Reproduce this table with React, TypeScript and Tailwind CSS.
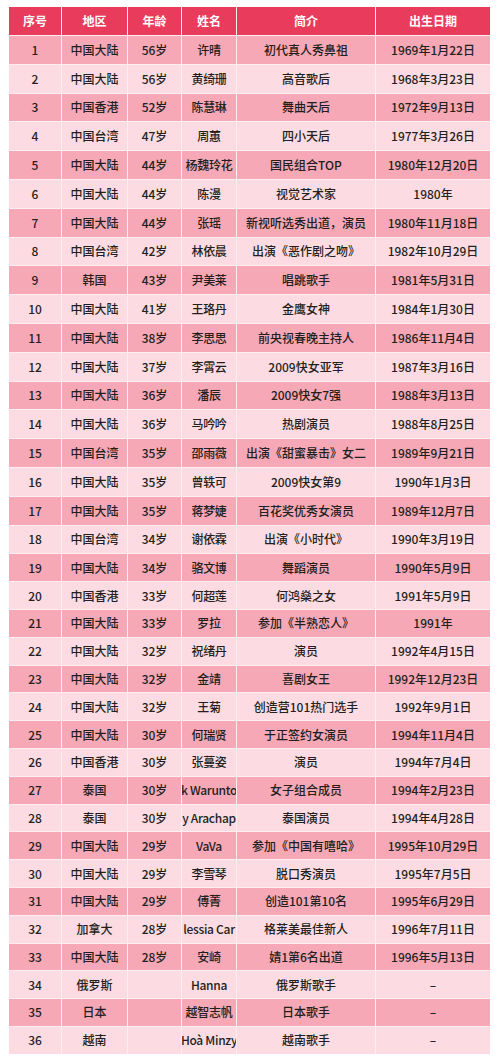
const rows: string[][] = [
  ["1", "中国大陆", "56岁", "许晴", "初代真人秀鼻祖", "1969年1月22日"],
  ["2", "中国大陆", "56岁", "黄绮珊", "高音歌后", "1968年3月23日"],
  ["3", "中国香港", "52岁", "陈慧琳", "舞曲天后", "1972年9月13日"],
  ["4", "中国台湾", "47岁", "周蕙", "四小天后", "1977年3月26日"],
  ["5", "中国大陆", "44岁", "杨魏玲花", "国民组合TOP", "1980年12月20日"],
  ["6", "中国大陆", "44岁", "陈漫", "视觉艺术家", "1980年"],
  ["7", "中国大陆", "44岁", "张瑶", "新视听选秀出道，演员", "1980年11月18日"],
  ["8", "中国台湾", "42岁", "林依晨", "出演《恶作剧之吻》", "1982年10月29日"],
  ["9", "韩国", "43岁", "尹美莱", "唱跳歌手", "1981年5月31日"],
  ["10", "中国大陆", "41岁", "王珞丹", "金鹰女神", "1984年1月30日"],
  ["11", "中国大陆", "38岁", "李思思", "前央视春晚主持人", "1986年11月4日"],
  ["12", "中国大陆", "37岁", "李霄云", "2009快女亚军", "1987年3月16日"],
  ["13", "中国大陆", "36岁", "潘辰", "2009快女7强", "1988年3月13日"],
  ["14", "中国大陆", "36岁", "马吟吟", "热剧演员", "1988年8月25日"],
  ["15", "中国台湾", "35岁", "邵雨薇", "出演《甜蜜暴击》女二", "1989年9月21日"],
  ["16", "中国大陆", "35岁", "曾轶可", "2009快女第9", "1990年1月3日"],
  ["17", "中国大陆", "35岁", "蒋梦婕", "百花奖优秀女演员", "1989年12月7日"],
  ["18", "中国台湾", "34岁", "谢依霖", "出演《小时代》", "1990年3月19日"],
  ["19", "中国大陆", "34岁", "骆文博", "舞蹈演员", "1990年5月9日"],
  ["20", "中国香港", "33岁", "何超莲", "何鸿燊之女", "1991年5月9日"],
  ["21", "中国大陆", "33岁", "罗拉", "参加《半熟恋人》", "1991年"],
  ["22", "中国大陆", "32岁", "祝绪丹", "演员", "1992年4月15日"],
  ["23", "中国大陆", "32岁", "金靖", "喜剧女王", "1992年12月23日"],
  ["24", "中国大陆", "32岁", "王菊", "创造营101热门选手", "1992年9月1日"],
  ["25", "中国大陆", "30岁", "何瑞贤", "于正签约女演员", "1994年11月4日"],
  ["26", "中国香港", "30岁", "张蔓姿", "演员", "1994年7月4日"],
  ["27", "泰国", "30岁", "k Warunto", "女子组合成员", "1994年2月23日"],
  ["28", "泰国", "30岁", "y Arachap", "泰国演员", "1994年4月28日"],
  ["29", "中国大陆", "29岁", "VaVa", "参加《中国有嘻哈》", "1995年10月29日"],
  ["30", "中国大陆", "29岁", "李雪琴", "脱口秀演员", "1995年7月5日"],
  ["31", "中国大陆", "29岁", "傅菁", "创造101第10名", "1995年6月29日"],
  ["32", "加拿大", "28岁", "lessia Car", "格莱美最佳新人", "1996年7月11日"],
  ["33", "中国大陆", "28岁", "安崎", "婧1第6名出道", "1996年5月13日"],
  ["34", "俄罗斯", "", "Hanna", "俄罗斯歌手", "–"],
  ["35", "日本", "", "越智志帆", "日本歌手", "–"],
  ["36", "越南", "", "Hoà Minzy", "越南歌手", "–"],
];

const headers = ["序号", "地区", "年龄", "姓名", "简介", "出生日期"];

const grid = "grid grid-cols-[52px_65px_53px_54px_138px_114px] gap-x-px";

export default function App() {
  return (
    <div className="min-h-[1059px] w-[500px] bg-white pl-[9px] pt-[7px] font-['Noto_Sans_CJK_SC',sans-serif]">
      <div className="flex w-[481px] flex-col gap-y-px bg-[#fdeef1]">
        <div className={`${grid} h-[28px]`}>
          {headers.map((h) => (
            <div key={h} className="flex items-center justify-center bg-[#e93c5c] text-[12px] font-bold text-white">
              {h}
            </div>
          ))}
        </div>
        {rows.map((r, i) => (
          <div key={r[0]} className={`${grid} ${i < 18 ? "h-[27.8px]" : "h-[26.8px]"}`}>
            {r.map((c, j) => (
              <div
                key={j}
                className={`flex items-center justify-center overflow-hidden whitespace-nowrap text-[12px] font-medium text-[#231f20] ${
                  j === 3 ? "tracking-[-0.3px]" : ""
                } ${i % 2 === 0 ? "bg-[#f6a8b6]" : "bg-[#fcdce2]"}`}
              >
                {c}
              </div>
            ))}
          </div>
        ))}
      </div>
    </div>
  );
}
